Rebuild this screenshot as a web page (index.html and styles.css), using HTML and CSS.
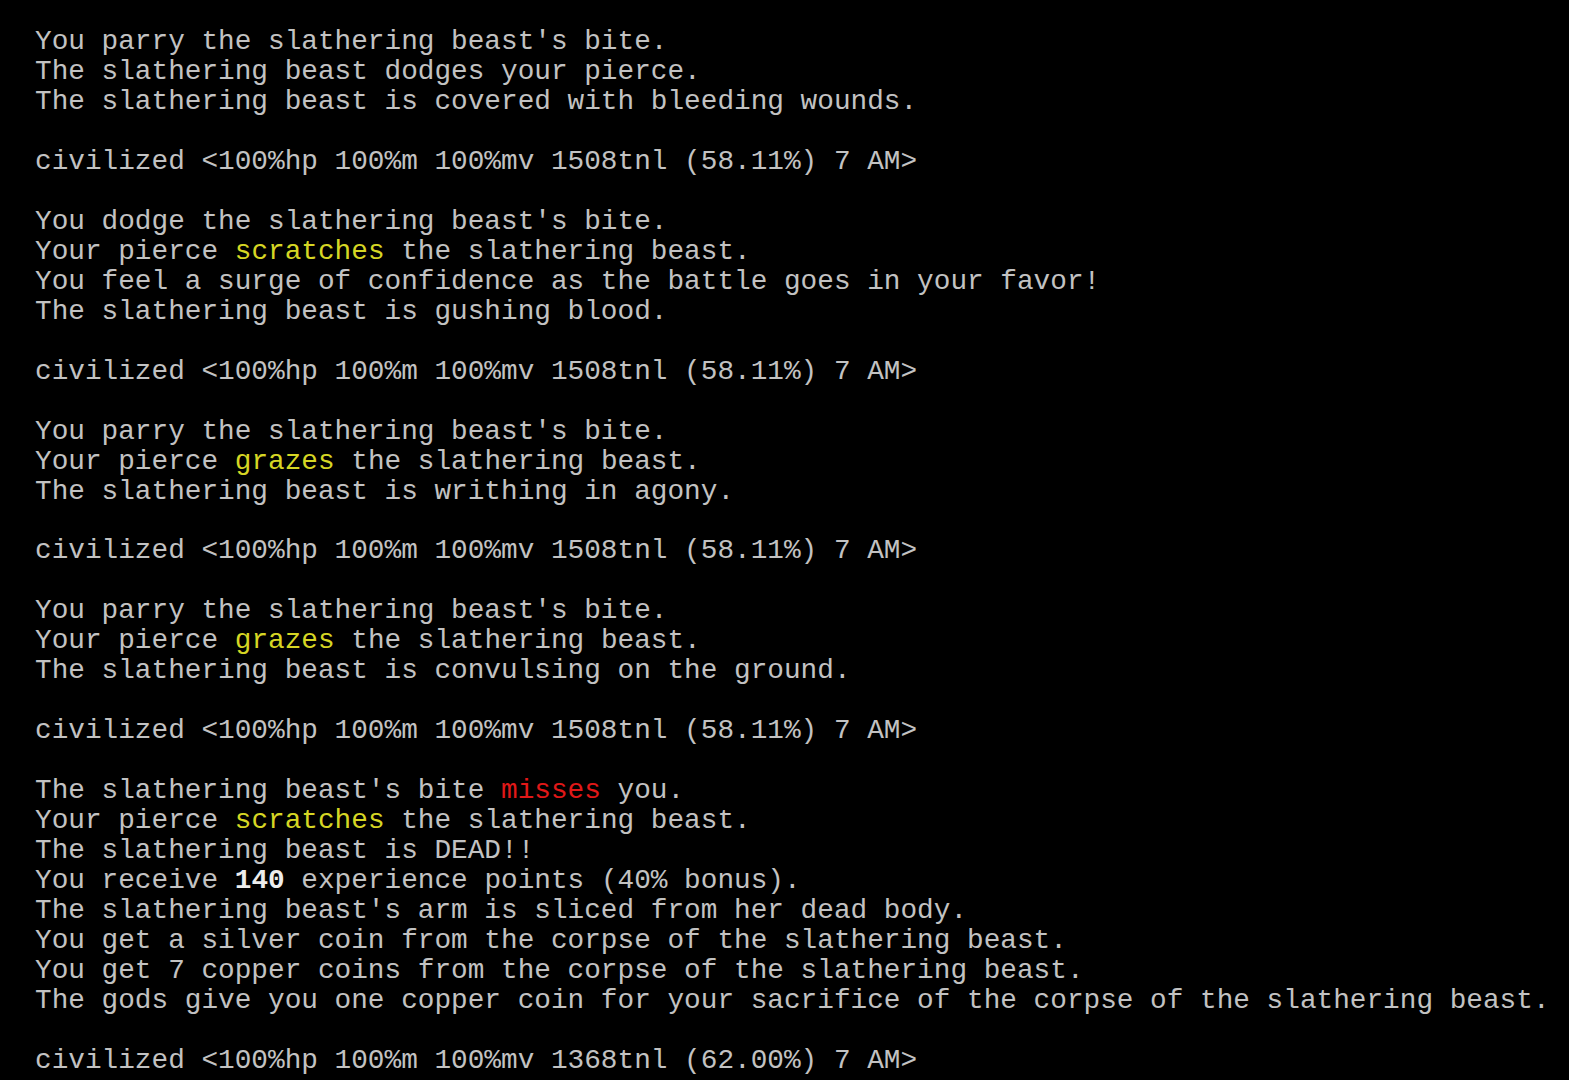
FILE: index.html
```html
<!DOCTYPE html>
<html>
<head>
<meta charset="utf-8">
<link rel="stylesheet" href="styles.css">
</head>
<body>
<div class="term">
  <div class="line">You parry the slathering beast's bite.</div>
  <div class="line">The slathering beast dodges your pierce.</div>
  <div class="line">The slathering beast is covered with bleeding wounds.</div>
  <div class="line"></div>
  <div class="line">civilized &lt;100%hp 100%m 100%mv 1508tnl (58.11%) 7 AM&gt;</div>
  <div class="line"></div>
  <div class="line">You dodge the slathering beast's bite.</div>
  <div class="line">Your pierce <span class="hit">scratches</span> the slathering beast.</div>
  <div class="line">You feel a surge of confidence as the battle goes in your favor!</div>
  <div class="line">The slathering beast is gushing blood.</div>
  <div class="line"></div>
  <div class="line">civilized &lt;100%hp 100%m 100%mv 1508tnl (58.11%) 7 AM&gt;</div>
  <div class="line"></div>
  <div class="line">You parry the slathering beast's bite.</div>
  <div class="line">Your pierce <span class="hit">grazes</span> the slathering beast.</div>
  <div class="line">The slathering beast is writhing in agony.</div>
  <div class="line"></div>
  <div class="line">civilized &lt;100%hp 100%m 100%mv 1508tnl (58.11%) 7 AM&gt;</div>
  <div class="line"></div>
  <div class="line">You parry the slathering beast's bite.</div>
  <div class="line">Your pierce <span class="hit">grazes</span> the slathering beast.</div>
  <div class="line">The slathering beast is convulsing on the ground.</div>
  <div class="line"></div>
  <div class="line">civilized &lt;100%hp 100%m 100%mv 1508tnl (58.11%) 7 AM&gt;</div>
  <div class="line"></div>
  <div class="line">The slathering beast's bite <span class="miss">misses</span> you.</div>
  <div class="line">Your pierce <span class="hit">scratches</span> the slathering beast.</div>
  <div class="line">The slathering beast is DEAD!!</div>
  <div class="line">You receive <b class="bold">140</b> experience points (40% bonus).</div>
  <div class="line">The slathering beast's arm is sliced from her dead body.</div>
  <div class="line">You get a silver coin from the corpse of the slathering beast.</div>
  <div class="line">You get 7 copper coins from the corpse of the slathering beast.</div>
  <div class="line">The gods give you one copper coin for your sacrifice of the corpse of the slathering beast.</div>
  <div class="line"></div>
  <div class="line">civilized &lt;100%hp 100%m 100%mv 1368tnl (62.00%) 7 AM&gt;</div>
</div>
</body>
</html>
```
FILE: styles.css
```css
html, body {
  margin: 0;
  padding: 0;
  background: #000;
  height: 100%;
  overflow: hidden;
}
.term {
  display: flex;
  flex-direction: column;
  padding: 27px 0 0 35px;
  font-family: "Liberation Mono", "Courier New", monospace;
  font-size: 27.74px;
  line-height: 29.98px;
  color: #c2c2c2;
}
.line {
  height: 29.98px;
  white-space: pre;
}
.hit {
  color: #d6d624;
}
.miss {
  color: #e01818;
}
.bold {
  color: #ededed;
  font-weight: bold;
}
```
